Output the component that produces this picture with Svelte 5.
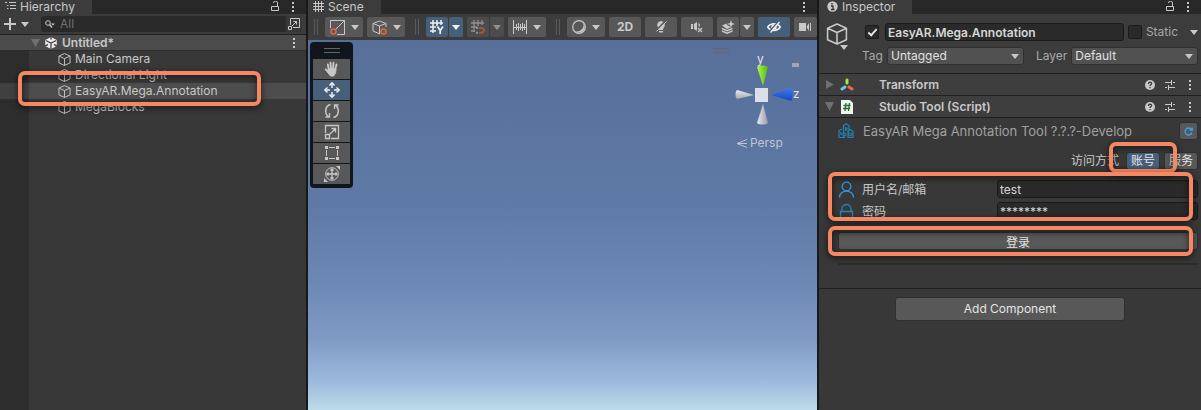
<script>
  const objects = [
    { name: 'Main Camera' },
    { name: 'Directional Light' },
    { name: 'EasyAR.Mega.Annotation', marked: true },
    { name: 'MegaBlocks' }
  ];
  const tools = ['hand', 'move', 'rotate', 'scale', 'rect', 'transform'];

  let selected = 'EasyAR.Mega.Annotation';
  let tool = 'move';
  let access = 'account';
  let search = '';
  let objectName = 'EasyAR.Mega.Annotation';
  let active = true;
  let isStatic = false;
  let user = 'test';
  let password = '********';
</script>

{#snippet caret()}
  <svg class="caret" width="8" height="5" viewBox="0 0 8 5" aria-hidden="true"><path d="M0 0h8L4 5z" fill="currentColor" /></svg>
{/snippet}

{#snippet kebab()}
  <svg width="4" height="12" viewBox="0 0 4 12" aria-hidden="true"><path d="M1 1h2v2H1zM1 5h2v2H1zM1 9h2v2H1z" fill="currentColor" /></svg>
{/snippet}

{#snippet lock()}
  <svg width="10" height="12" viewBox="0 0 10 12" fill="none" stroke="currentColor" aria-hidden="true"><path d="M1.500 5.500h7v4h-7zM7.500 5V2a2 2 0 0 0-4 0" /></svg>
{/snippet}

{#snippet cube(size)}
  <svg width={size} height={size} viewBox="0 0 14 14" fill="none" stroke="currentColor" stroke-linejoin="round" aria-hidden="true">
    <path d="M7 .6l6 2.700v7.400L7 13.400 1 10.700V3.300zM1 3.300L7 6l6-2.700M7 6v7.400" />
  </svg>
{/snippet}

{#snippet grip()}
  <span class="grip"></span>
{/snippet}

{#snippet componentActions(name)}
  <div class="actions">
    <button class="icon-btn" aria-label="{name} help">
      <svg width="10" height="10" viewBox="0 0 10 10"><circle cx="5" cy="5" r="5" fill="currentColor" /><path d="M3.400 3.900c0-2.200 3.300-2.100 3.200-.2C6.500 4.800 5 4.700 5 6M5 7v1.200" fill="none" stroke="#3c3c3c" stroke-width="1.300" /></svg>
    </button>
    <button class="icon-btn" aria-label="{name} presets">
      <svg width="10" height="10" viewBox="0 0 10 10" fill="none" stroke="currentColor"><path d="M0 2.500h6M8 2.500h2M6.500 0v5M0 7.500h2M4 7.500h6M3.500 5v5" /></svg>
    </button>
    <button class="icon-btn more" aria-label="{name} menu">{@render kebab()}</button>
  </div>
{/snippet}

<main class="editor">
  <!-- Hierarchy -->
  <section class="panel hierarchy">
    <header class="tabs">
      <h2 class="tab">
        <svg width="11" height="12" viewBox="0 0 11 12" fill="none" stroke="currentColor" aria-hidden="true"><path d="M0 1.500h2M4 1.500h7M2 4.500h1.500M5 4.500h6M2 7.500h1.500M5 7.500h6" /></svg>
        Hierarchy
      </h2>
      <button class="icon-btn" aria-label="Lock hierarchy">{@render lock()}</button>
      <button class="icon-btn" aria-label="Hierarchy menu">{@render kebab()}</button>
    </header>

    <div class="find">
      <button class="icon-btn add" aria-label="Create">
        <svg width="12" height="12" viewBox="0 0 12 12" aria-hidden="true"><path d="M6 0v12M0 6h12" stroke="currentColor" stroke-width="2" /></svg>
        {@render caret()}
      </button>
      <div class="search">
        <svg width="10" height="8" viewBox="0 0 10 8" fill="none" stroke="currentColor" aria-hidden="true"><circle cx="3" cy="3" r="2.300" /><path d="M4.500 4.500L7 7.500" stroke-width="1.400" /><path d="M6 3.500h4L8 5.500z" fill="currentColor" stroke="none" /></svg>
        <input aria-label="Search hierarchy" placeholder="All" bind:value={search} />
        <button class="icon-btn popout" aria-label="Open search window">
          <svg width="12" height="12" viewBox="0 0 12 12" fill="none" stroke="currentColor" aria-hidden="true"><path d="M2.500 7V.5h9v9H5M.5 8.500h3v3h-3zM4 8l4.500-4.500M5.500 3.500h3v3" /></svg>
        </button>
      </div>
    </div>

    <div class="scene-row">
      <svg class="fold" width="9" height="8" viewBox="0 0 9 8" aria-hidden="true"><path d="M0 0h9L4.500 8z" fill="#6f6f6f" /></svg>
      <svg width="12" height="12" viewBox="0 0 12 12" aria-hidden="true">
        <path d="M6 0l5.800 3v6L6 12 .2 9V3z" fill="#eee" />
        <path d="M6 6.200V12M6 6.200L.8 3.500M6 6.200l5.200-2.700M6 0v2.600M0 9l3-1.500M12 9L9 7.500" stroke="#4b4b4b" stroke-width="1.400" />
      </svg>
      <strong>Untitled*</strong>
      <button class="icon-btn" aria-label="Scene menu">{@render kebab()}</button>
    </div>

    <ul class="tree">
      {#each objects as o (o.name)}
        <li class:selected={selected === o.name}>
          <button on:click={() => (selected = o.name)}>
            {@render cube(13)}
            {o.name}
          </button>
          {#if o.marked}<span class="marker"></span>{/if}
        </li>
      {/each}
    </ul>
  </section>

  <!-- Scene view -->
  <section class="panel scene">
    <header class="tabs">
      <h2 class="tab">
        <svg width="11" height="12" viewBox="0 0 11 12" stroke="currentColor" aria-hidden="true"><path d="M2.500 0v11M5.500 0v11M8.500 0v11M0 2.500h11M0 5.500h11M0 8.500h11" /></svg>
        Scene
      </h2>
      <button class="icon-btn" aria-label="Scene menu">{@render kebab()}</button>
    </header>

    <div class="toolbar">
      {@render grip()}
      <button class="tb drop" aria-label="Tool handle position">
        <svg width="15" height="15" viewBox="0 0 15 15" fill="none" stroke="currentColor"><path d="M.5 8V.5h14v14H7M5.500 9.500l9-9" /><circle cx="3.500" cy="11.500" r="2.500" stroke="#e0683f" stroke-width="1.500" /></svg>
        {@render caret()}
      </button>
      <button class="tb drop" aria-label="Tool handle rotation">
        <svg width="15" height="15" viewBox="0 0 15 15" fill="none" stroke="currentColor"><path d="M8 14L1 11V3.500L7.500 1 14 3.500V7M1 3.500L7.500 6 14 3.500M7.500 6v8" /><circle cx="11.500" cy="11.500" r="2.500" stroke="#e0683f" stroke-width="1.500" /></svg>
        {@render caret()}
      </button>
      {@render grip()}
      <div class="split">
        <button class="tb on" aria-label="Toggle grid">
          <svg width="14" height="14" viewBox="0 0 14 14" fill="none" stroke="currentColor" stroke-width="1.500"><path d="M3 0v13M7 0v6M11 0v5M0 3h13M0 7h6M0 11h6" /><path d="M7.500 6.500l2.700 4 2.800-4M10.200 10v4" stroke-width="1.700" /></svg>
        </button>
        <button class="tb arrow on" aria-label="Grid options">{@render caret()}</button>
      </div>
      <div class="split muted">
        <button class="tb" aria-label="Grid snapping" disabled>
          <svg width="14" height="14" viewBox="0 0 14 14" fill="none" stroke="currentColor" stroke-width="1.300"><path d="M3 0v12M7 0v6M11 0v5M0 3h13M0 7h6M0 11h4" /><path d="M8 8h2.500a2.200 2.200 0 0 1 0 4.800H8" stroke="#e0683f" stroke-width="2" /><path d="M5 8h2M5 12.800h2" stroke-width="2" /></svg>
        </button>
        <button class="tb arrow" aria-label="Snap options" disabled>{@render caret()}</button>
      </div>
      <button class="tb drop" aria-label="Increment snapping">
        <svg width="14" height="14" viewBox="0 0 14 14" stroke="currentColor"><path d="M.5 0v14M13.500 0v14M3.500 4v6M5.500 3v8M7.500 4v6M9.500 3v8M11.500 4v6M1 7.500h12" /></svg>
        {@render caret()}
      </button>
      {@render grip()}
      <button class="tb drop" aria-label="Draw mode">
        <svg width="14" height="14" viewBox="0 0 14 14"><circle cx="7" cy="7" r="6.300" fill="none" stroke="currentColor" stroke-width="1.200" /><path d="M11 2.500A6 6 0 1 1 2.500 11 6.500 6.500 0 0 0 11 2.500z" fill="currentColor" /></svg>
        {@render caret()}
      </button>
      <button class="tb wide">2D</button>
      <button class="tb wide" aria-label="Scene lighting">
        <svg width="12" height="14" viewBox="0 0 12 14"><path d="M6 1a4 4 0 0 1 2.500 7L8 10H4l-.5-2A4 4 0 0 1 6 1zM4 11h4v1.500H4z" fill="currentColor" /><path d="M1 10.500L11 .5" stroke="#585858" stroke-width="1.500" /><path d="M1.500 11.500L11.500 1.500" stroke="currentColor" /></svg>
      </button>
      <button class="tb wide" aria-label="Scene audio">
        <svg width="12" height="12" viewBox="0 0 12 12"><path d="M0 3h2v5H0zM3 3l3-2v9L3 8z" fill="currentColor" /><path d="M7 7l4 4M11 7l-4 4M7.500 2.500c1 1 1 2 .8 3" stroke="currentColor" stroke-width="1.200" fill="none" /></svg>
      </button>
      <div class="split">
        <button class="tb" aria-label="Effects">
          <svg width="14" height="14" viewBox="0 0 14 14"><path d="M1 5.500l4.500-2L6 5l3 1.500 1 .7L6 9z" fill="currentColor" /><path d="M1 8.500l5 2.200 5.500-2.200M1 11l5 2.200L11.500 11" fill="none" stroke="currentColor" stroke-width="1.400" /><path d="M10 0l1 3 3 1-3 1-1 3-1-3-3-1 3-1z" fill="currentColor" /></svg>
        </button>
        <button class="tb arrow" aria-label="Effect options">{@render caret()}</button>
      </div>
      <button class="tb wide on" aria-label="Scene visibility">
        <svg width="14" height="12" viewBox="0 0 14 12" fill="none" stroke="currentColor" stroke-width="1.500"><path d="M.7 6C3.500 1.500 10.500 1.500 13.300 6 10.500 10.500 3.500 10.500.7 6z" /><circle cx="7" cy="6" r="2" fill="currentColor" /><path d="M2.500 11L11.500 1" stroke="#46607c" stroke-width="2" /><path d="M3.500 11.500L12.500 1" stroke-width="1.300" /></svg>
      </button>
      <button class="tb wide camera" aria-label="Scene camera">
        <svg width="13" height="10" viewBox="0 0 13 10"><path d="M0 1h7v8H0zM7.500 5L10 1v8zM11 1h1v8h-1z" fill="currentColor" /></svg>
      </button>
    </div>

    <div class="sky">
      <div class="palette">
        <span class="handle"></span>
        {#each tools as t}
          <button class:on={tool === t} aria-label="{t} tool" on:click={() => (tool = t)}>
            <svg width="16" height="16" viewBox="0 0 16 16" fill="none" stroke="currentColor">
              {#if t === 'hand'}
                <path d="M5 9L3.800 3.500M7 8L6.500 1.800M9 8L9.500 1.800M11 9l1.500-5.500M5 12L1.800 8.300" stroke-width="1.900" stroke-linecap="round" />
                <path d="M4.200 8h7.800l-.3 3.500-2 3.500H6.500L3.500 11z" fill="currentColor" />
              {:else if t === 'move'}
                <path d="M8 2v4M8 10v4M2 8h4M10 8h4" stroke-width="1.500" />
                <path d="M5.500 3.500L8 .8l2.500 2.700M5.500 12.500L8 15.200l2.500-2.700M3.500 5.500L.8 8l2.700 2.500M12.500 5.500L15.200 8l-2.700 2.500" stroke-width="1.500" />
              {:else if t === 'rotate'}
                <path d="M6.500 1.500C.5 3 .5 11 4.500 13.500M9.500 14.500c6-1.500 6-9.500 2-12" stroke-width="1.500" />
                <path d="M1.500 14h4v-4M14.500 2h-4v4" stroke-width="1.300" />
              {:else if t === 'scale'}
                <path d="M1.500 9V1.500h13v13H7M1.500 10.500h4v4h-4zM6 10l5-5M7.500 4.500h4v4" stroke-width="1.300" />
              {:else if t === 'rect'}
                <path d="M5 2.500h6M5 13.500h6M2.500 5v6M13.500 5v6" />
                <path d="M1 1h3v3H1zM12 1h3v3h-3zM1 12h3v3H1zM12 12h3v3h-3z" fill="currentColor" stroke="none" />
              {:else}
                <circle cx="8" cy="8" r="6.300" />
                <path d="M8 3v10M3 8h10M6.500 4.500L8 3l1.500 1.500M6.500 11.500L8 13l1.500-1.500M4.500 6.500L3 8l1.500 1.500M11.500 6.500L13 8l-1.500 1.500" stroke-width="1.300" />
                <path d="M12 0h4v4zM0 12v4h4z" fill="currentColor" stroke="none" />
              {/if}
            </svg>
          </button>
        {/each}
      </div>

      <div class="orientation">
        <span class="handle"></span>
        <svg width="86" height="76" viewBox="0 0 86 76" aria-label="Scene gizmo">
          <defs>
            <linearGradient id="grey"><stop offset="0" stop-color="#e9e9ee" /><stop offset="1" stop-color="#9a9ba6" /></linearGradient>
            <linearGradient id="greyH" x2="0" y2="1"><stop offset="0" stop-color="#ededf1" /><stop offset="1" stop-color="#a5a6b0" /></linearGradient>
            <linearGradient id="green"><stop offset="0" stop-color="#b4f94c" /><stop offset="1" stop-color="#55b51c" /></linearGradient>
            <linearGradient id="blue" x2="0" y2="1"><stop offset="0" stop-color="#3c78f5" /><stop offset="1" stop-color="#1b48bd" /></linearGradient>
          </defs>
          <text x="44" y="10">y</text>
          <text x="80" y="45">z</text>
          <path d="M44 14c2-2 9-2 11 0l-5 19z" fill="url(#green)" />
          <path d="M44 70c2 2 9 2 11 0l-5-19z" fill="url(#grey)" />
          <path d="M24 37c-2 1-2 8 0 9l17-4z" fill="url(#greyH)" />
          <path d="M78 35c2 2 2 11 0 13l-20-6z" fill="url(#blue)" />
          <path d="M54 36l3 1v10l-3 1z" fill="#6f7280" />
          <path d="M42 35h13v14H42z" fill="#dcdfe9" />
          <path d="M79 10h7v4h-7z" fill="#a3a6ad" />
          <path d="M80 7c0-2 4-2 4 0v3" fill="none" stroke="#68738a" />
        </svg>
        <button class="persp">
          <svg width="11" height="9" viewBox="0 0 11 9" fill="none" stroke="currentColor" aria-hidden="true"><path d="M11 .5L1 4.500l10 4M1 4.500h10" /></svg>
          Persp
        </button>
      </div>
    </div>
  </section>

  <!-- Inspector -->
  <section class="panel inspector">
    <header class="tabs">
      <h2 class="tab">
        <svg width="11" height="12" viewBox="0 0 11 12" aria-hidden="true"><circle cx="5.500" cy="5.500" r="5.200" fill="currentColor" /><path d="M4 5h2v3.500M4 8.500h3.500M5 2v1.500" stroke="#333" stroke-width="1.300" fill="none" /></svg>
        Inspector
      </h2>
      <button class="icon-btn" aria-label="Lock inspector">{@render lock()}</button>
      <button class="icon-btn" aria-label="Inspector menu">{@render kebab()}</button>
    </header>

    <div class="object">
      <button class="icon-btn object-icon" aria-label="Select icon">
        {@render cube(22)}
        {@render caret()}
      </button>
      <div class="object-fields">
        <div class="line">
          <input class="check active" type="checkbox" aria-label="Active" bind:checked={active} />
          <input class="field name" aria-label="Object name" bind:value={objectName} />
          <label class="static"><input class="check" type="checkbox" bind:checked={isStatic} />Static</label>
          <button class="icon-btn" aria-label="Static flags">{@render caret()}</button>
        </div>
        <div class="line">
          <label for="tag">Tag</label>
          <div class="select tag">
            <select id="tag"><option>Untagged</option></select>
            {@render caret()}
          </div>
          <label for="layer">Layer</label>
          <div class="select">
            <select id="layer"><option>Default</option></select>
            {@render caret()}
          </div>
        </div>
      </div>
    </div>

    <div class="component">
      <svg class="fold" width="9" height="9" viewBox="0 0 9 9" aria-hidden="true"><path d="M1 0l8 4.500L1 9z" fill="#6f6f6f" /></svg>
      <svg width="14" height="14" viewBox="0 0 14 14" fill="none" stroke-width="3" stroke-linecap="round" aria-hidden="true"><path d="M7 2v3" stroke="#a5e84a" /><path d="M5 9l-3 2" stroke="#6fc4f0" /><path d="M9 9l3 2" stroke="#f4683e" /></svg>
      <strong>Transform</strong>
      {@render componentActions('Transform')}
    </div>
    <div class="component">
      <svg class="fold" width="9" height="9" viewBox="0 0 9 9" aria-hidden="true"><path d="M0 0h9L4.500 9z" fill="#6f6f6f" /></svg>
      <svg width="14" height="14" viewBox="0 0 14 14" aria-hidden="true"><path d="M1 0h9l3 3v11H1z" fill="#f2f4f2" /><path d="M6 3L5 11M9.500 3l-1 8M3.500 5.500h7M3 8.500h7" stroke="#22702e" stroke-width="1.300" /></svg>
      <strong>Studio Tool (Script)</strong>
      {@render componentActions('Studio Tool')}
    </div>

    <form class="studio" on:submit|preventDefault>
      <div class="line title">
        <svg width="16" height="16" viewBox="0 0 16 16" fill="none" stroke="#2284b4" stroke-width="1.200" aria-hidden="true"><path d="M5.500 14V2.500L8 .8l3 1.700V8M1 14.500v-7l3-1.500M1 14.500h6M3 9v3M7.500 4v4M9 4.500v3M10 8.500l2.500-2 2.500 2v6h-5z" /><circle cx="12" cy="11.500" r="1.500" /><circle cx="6.500" cy="11.500" r="1.500" /></svg>
        <span>EasyAR Mega Annotation Tool ?.?.?-Develop</span>
        <button type="button" class="btn refresh" aria-label="Refresh">
          <svg width="9" height="9" viewBox="0 0 9 9" fill="none" stroke="#3aa0ea" stroke-width="1.400"><path d="M7.500 2.500a3.500 3.500 0 1 0 .5 3M8.300.5v2.500H5.500" /></svg>
        </button>
      </div>

      <div class="line access">
        <span>访问方式</span>
        <span class="marked">
          <button type="button" class="btn" class:on={access === 'account'} on:click={() => (access = 'account')}>账号</button>
          <span class="marker"></span>
        </span>
        <button type="button" class="btn" class:on={access === 'service'} on:click={() => (access = 'service')}>服务</button>
      </div>

      <div class="credentials marked">
        <div class="line">
          <svg width="16" height="18" viewBox="0 0 16 18" fill="none" stroke="#2b9be6" stroke-width="1.300" aria-hidden="true"><circle cx="8.500" cy="6.500" r="4.300" /><path d="M1.500 17.500c0-8.500 14-8.500 14 0" /></svg>
          <label for="user">用户名/邮箱</label>
          <input id="user" class="field" bind:value={user} />
        </div>
        <div class="line">
          <svg width="16" height="18" viewBox="0 0 16 18" fill="none" stroke="#2484bd" stroke-width="1.300" aria-hidden="true"><path d="M2.500 9.500h12v8h-12zM4 9V7a4.500 4.500 0 0 1 9 0v2" /></svg>
          <label for="password">密码</label>
          <input id="password" class="field" autocomplete="off" bind:value={password} />
        </div>
        <span class="marker"></span>
      </div>

      <div class="login marked">
        <button class="btn">登录</button>
        <span class="marker"></span>
      </div>
      <hr />
    </form>

    <div class="footer">
      <button class="btn add-component">Add Component</button>
    </div>
  </section>
</main>

<style>
  :global(body) { background: #191919; }

  /* ===== Shell ===== */
  .editor {
    --text: #c8c8c8;
    --line: #1f1f1f;
    --button: #585858;
    --blue: #46607c;
    display: grid;
    grid-template-columns: 306px minmax(0, 1fr) 382px;
    gap: 2px;
    min-height: 100vh;
    background: #191919;
    color: var(--text);
    font-family: Inter, "Noto Sans CJK SC", sans-serif;
    font-size: 12px;
    line-height: 16px;
  }
  .panel {
    display: flex;
    flex-direction: column;
    min-width: 0;
    background: #383838;
  }
  button, input, select {
    box-sizing: border-box;
    margin: 0;
    padding: 0;
    border: 0;
    color: inherit;
    font: inherit;
  }
  svg { display: block; flex: none; }
  .icon-btn {
    display: flex;
    align-items: center;
    background: none;
  }

  /* ===== Tabs ===== */
  .tabs {
    display: flex;
    align-items: center;
    gap: 11px;
    height: 14px;
    padding-right: 11px;
    background: #282828;
  }
  .tab {
    display: flex;
    align-items: center;
    gap: 4px;
    height: 14px;
    margin: 0 auto 0 0;
    padding: 0 17px 0 5px;
    background: #3c3c3c;
    font-size: 12px;
    line-height: 14px;
    font-weight: 400;
  }

  /* ===== Hierarchy ===== */
  .find {
    display: flex;
    align-items: center;
    gap: 12px;
    height: 20px;
    padding: 0 4px;
    background: #3c3c3c;
    border-bottom: 1px solid var(--line);
  }
  .add { gap: 5px; }
  .search {
    display: flex;
    flex: 1;
    align-items: center;
    gap: 5px;
    height: 16px;
    padding-left: 4px;
    background: #2a2a2a;
    border-radius: 3px;
    overflow: hidden;
  }
  .search input {
    flex: 1;
    min-width: 0;
    background: none;
    outline: none;
  }
  .search input::placeholder { color: #707070; }
  .popout {
    height: 16px;
    padding: 0 2px;
    background: #383838;
  }
  .scene-row {
    display: flex;
    align-items: center;
    gap: 5px;
    height: 15px;
    padding: 0 10px 0 31px;
    background: #4b4b4b;
    border-bottom: 1px solid #2d2d2d;
  }
  .scene-row .icon-btn { margin-left: auto; }
  .tree {
    flex: 1;
    margin: 0;
    padding: 0;
    list-style: none;
    background: linear-gradient(90deg, #2d2d2d 29px, transparent 29px);
  }
  .tree li { position: relative; }
  .tree li.selected { background: linear-gradient(90deg, #404040 29px, #4d4d4d 29px); }
  .tree button {
    display: flex;
    align-items: center;
    gap: 4px;
    width: 100%;
    height: 16px;
    padding-left: 58px;
    background: none;
  }

  /* ===== Callout frames ===== */
  .marked { position: relative; }
  .marker {
    position: absolute;
    z-index: 1;
    border: 4px solid #f58762;
    border-radius: 7px;
    filter: drop-shadow(0 2px 3px rgba(0, 0, 0, 0.7));
    pointer-events: none;
  }
  .tree .marker { inset: -12px 45px -7px 18px; }
  .access .marker { inset: -10px -17px -3px -17px; }
  .credentials .marker { inset: -8px 5px -1px -10px; }
  .login .marker { inset: -6px 5px -6px -10px; }

  /* ===== Scene toolbar ===== */
  .toolbar {
    display: flex;
    align-items: center;
    gap: 4px;
    height: 26px;
    background: #3c3c3c;
    overflow: hidden;
  }
  .grip {
    flex: none;
    box-sizing: border-box;
    width: 4px;
    height: 16px;
    margin: 0 3px 0 6px;
    border: solid #5a5a5a;
    border-width: 0 1px;
  }
  .split { display: flex; flex: none; gap: 1px; }
  .tb {
    display: flex;
    flex: none;
    align-items: center;
    justify-content: center;
    width: 22px;
    height: 20px;
    background: var(--button);
    border-radius: 2px;
    font-weight: 700;
  }
  .drop { width: 38px; gap: 6px; }
  .wide { width: 32px; }
  .camera { flex-shrink: 1; }
  .arrow { width: 14px; }
  .on { background: var(--blue); color: #f0f0f0; }
  .muted { opacity: 0.6; }

  /* ===== Scene view ===== */
  .sky {
    position: relative;
    flex: 1;
    background: linear-gradient(#576f99, #5f7aa6 45%, #6b87b4 65%, #7f9bc5 81%, #9bb9dc 92%, #bcdbe8);
  }
  .palette {
    position: absolute;
    top: 2px;
    left: 2px;
    display: grid;
    gap: 1px;
    padding: 0 3px 4px;
    background: #11151c;
    border-radius: 4px;
  }
  .handle {
    width: 16px;
    height: 3px;
    margin: 6px auto 5px;
    border: solid #66665f;
    border-width: 1px 0;
  }
  .palette button {
    display: grid;
    place-items: center;
    width: 37px;
    height: 20px;
    background: var(--button);
  }
  .palette button.on { background: var(--blue); }
  .orientation {
    position: absolute;
    top: 2px;
    right: 14px;
    display: grid;
    width: 90px;
  }
  .orientation .handle { margin: 6px 0 0; }
  .orientation text { fill: #e0e4ea; font-size: 12px; }
  .persp {
    display: flex;
    align-items: center;
    gap: 3px;
    margin: 6px 0 0 23px;
    background: none;
    color: #bcc5d4;
  }

  /* ===== Inspector ===== */
  .inspector .tab { padding-left: 8px; }
  .line {
    display: flex;
    align-items: center;
  }
  .object {
    display: flex;
    gap: 14px;
    padding: 9px 3px 8px 7px;
    background: #3c3c3c;
    border-bottom: 1px solid var(--line);
  }
  .object-icon {
    flex-direction: column;
    align-items: flex-end;
  }
  .object-fields {
    display: grid;
    flex: 1;
    gap: 6px;
  }
  .object-fields .line { gap: 4px; }
  .object-fields label { color: #a8a8a8; }
  .check {
    appearance: none;
    display: grid;
    place-items: center;
    flex: none;
    width: 14px;
    height: 14px;
    margin-right: 2px;
    background: #2a2a2a;
    border: 1px solid #1c1c1c;
    border-radius: 2px;
  }
  .check.active { margin-left: 3px; }
  .check:checked::before {
    content: "";
    width: 3px;
    height: 7px;
    margin-bottom: 2px;
    border: solid #e4e4e4;
    border-width: 0 2px 2px 0;
    transform: rotate(42deg);
  }
  .field {
    flex: 1;
    min-width: 0;
    height: 18px;
    padding: 0 2px;
    background: #2a2a2a;
    border: 1px solid #1a1a1a;
    border-radius: 3px;
    color: #d6d6d6;
  }
  .name { font-weight: 600; }
  .static {
    display: flex;
    align-items: center;
    gap: 2px;
    margin-right: 8px;
  }
  .select {
    display: grid;
    flex: 1;
    align-items: center;
    min-width: 0;
  }
  .select.tag { flex: 0 0 137px; margin-right: 8px; }
  .select > :global(*), .select select { grid-area: 1 / 1; }
  .select select {
    appearance: none;
    height: 18px;
    padding: 0 3px;
    background: #515151;
    border: 1px solid #303030;
    border-radius: 3px;
    color: #e0e0e0;
  }
  .select :global(.caret) {
    justify-self: end;
    margin-right: 5px;
    pointer-events: none;
  }
  .component {
    display: flex;
    align-items: center;
    gap: 6px;
    height: 21px;
    padding: 0 9px 0 6px;
    background: #3e3e3e;
    border-bottom: 1px solid var(--line);
  }
  .component strong { margin-left: 19px; }
  strong { font-weight: 600; }
  .actions {
    display: flex;
    gap: 10px;
    margin-left: auto;
  }
  .more { margin-left: 3px; }

  /* ===== Studio tool form ===== */
  .studio { padding: 4px 3px 23px 19px; }
  .btn {
    height: 18px;
    padding: 0 4px;
    background: var(--button);
    border: 1px solid #303030;
    border-radius: 3px;
    color: #e4e4e4;
  }
  .btn.on { background: var(--blue); }
  .title {
    gap: 9px;
    color: #a0a0a0;
    font-size: 13px;
  }
  .refresh { margin-left: auto; }
  .access {
    justify-content: flex-end;
    gap: 4px;
    margin-top: 12px;
  }
  .access .marked { display: flex; margin-left: 3px; }
  .credentials {
    display: grid;
    gap: 4px;
    margin-top: 10px;
  }
  .credentials .line { gap: 8px; }
  .credentials label { width: 127px; padding-top: 2px; }
  .login { margin-top: 12px; }
  .login .btn { display: block; width: 100%; padding-top: 2px; }
  hr {
    height: 2px;
    margin: 13px 0 0;
    border: 0;
    background: #2c2c2c;
  }
  .footer {
    display: flex;
    justify-content: center;
    padding: 8px 3px;
    border-top: 1px solid var(--line);
  }
  .add-component {
    width: 61%;
    height: 24px;
  }
</style>
